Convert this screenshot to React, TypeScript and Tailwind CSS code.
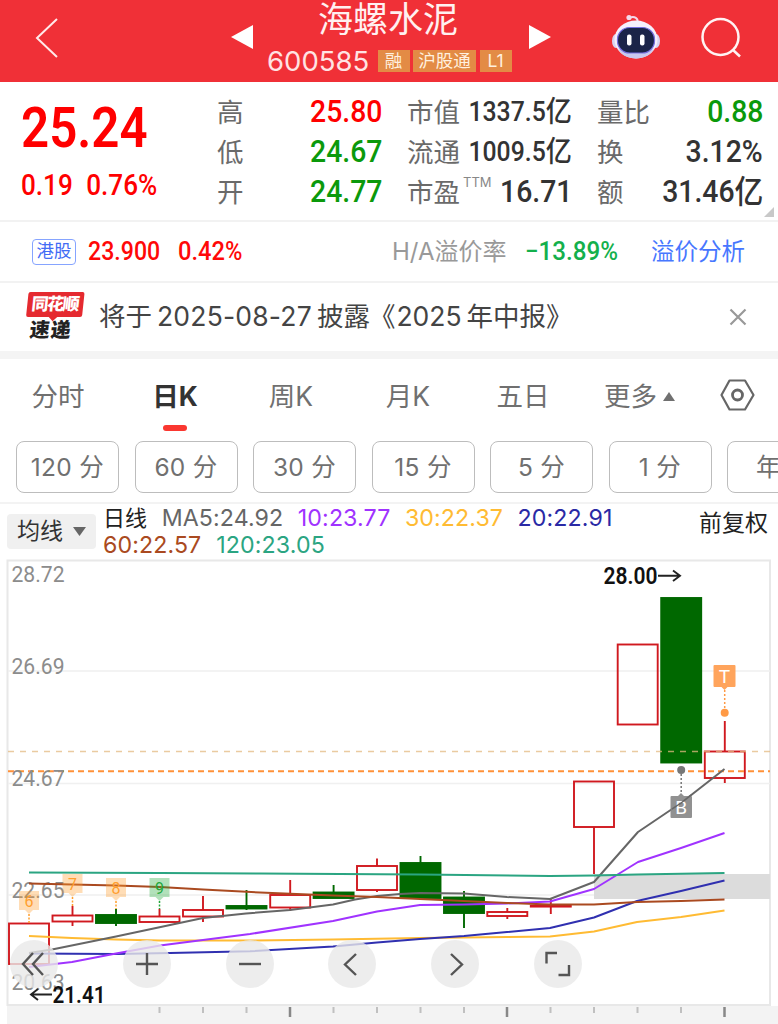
import clsx from "clsx";

const tags = [
  { label: "融", width: "w-[32px]" },
  { label: "沪股通", width: "w-[63px]" },
  { label: "L1", width: "w-[32px]" },
];

const tabs = [
  { label: "分时", width: "w-[116px]" },
  { label: "日K", width: "w-[118px]", active: true },
  { label: "周K", width: "w-[114px]" },
  { label: "月K", width: "w-[120px]" },
  { label: "五日", width: "w-[110px]" },
];

const periods = ["120 分", "60 分", "30 分", "15 分", "5 分", "1 分", "年"];

const averages = [
  { text: "MA5:24.92", className: "text-[#666666]" },
  { text: "10:23.77", className: "text-[#a033ff]" },
  { text: "30:22.37", className: "text-[#ffbb33]" },
  { text: "20:22.91", className: "text-[#2a2aa5]" },
];

type Candle = {
  x: number;
  top: number;
  bottom: number;
  high?: number;
  low?: number;
  down?: boolean;
};

const candles: Candle[] = [
  { x: 29, top: 923.5, bottom: 964 },
  { x: 72.5, top: 915.5, bottom: 921.5, high: 906, low: 926 },
  { x: 116, top: 915, bottom: 923, high: 909, low: 926, down: true },
  { x: 159.5, top: 916.5, bottom: 922, high: 909 },
  { x: 203, top: 910, bottom: 916.5, high: 896, low: 922 },
  { x: 246.5, top: 906, bottom: 908.5, high: 890, low: 910, down: true },
  { x: 290.2, top: 895, bottom: 907.5, high: 880, low: 911 },
  { x: 333.6, top: 892.5, bottom: 898, high: 885, down: true },
  { x: 377, top: 866, bottom: 890, high: 858.5, low: 892 },
  { x: 420.5, top: 863, bottom: 898, high: 856, low: 900, down: true },
  { x: 464, top: 897.5, bottom: 913, high: 891, low: 928, down: true },
  { x: 507.3, top: 912, bottom: 916, high: 908, low: 919 },
  { x: 550.8, top: 905.8, bottom: 906.6, high: 899, low: 914 },
  { x: 594, top: 781.5, bottom: 827, low: 874 },
  { x: 637.7, top: 644.5, bottom: 724.5 },
  { x: 681.2, top: 598, bottom: 762.5, down: true },
  { x: 724.8, top: 751.5, bottom: 778, high: 721, low: 783 },
];

const lines = [
  { color: "#ffbb33", points: "29,936 72,938 116,939.5 160,940.5 250,940.5 333,939.5 420,938 507,937 550,936.5 594,931.5 637,922 681,917 724.5,910.5" },
  { color: "#3030b0", points: "29,953.5 116,954 170,953 250,951.3 333,946.5 377,942.5 420,939 464,936 507,932 550,928 594,917.5 637,901 681,891 724.5,880.5" },
  { color: "#a033ff", points: "29,967 72,962 116,953.5 160,945.5 203,940 250,934 333,921 377,911.5 420,905 464,904.5 507,903.5 550,901.5 594,889 638,862 681,848 724.5,833" },
  { color: "#666666", points: "29,953 52,949.5 116,936.5 203,918 246,913.5 290,910 333,904.5 355,899.5 377,896 400,894 420,893 464,893.5 507,897 550,899 594,882 638,832 681,803 724.5,769" },
  { color: "#aa4a20", points: "29,883.5 72,884.5 116,885.5 160,887 203,889.5 260,892.5 333,895.5 377,897 420,899 507,903 550,904.5 594,904.5 637,902 681,901 724.5,899.5" },
  { color: "#2ba582", points: "29,872.5 160,873 260,873.5 420,874.5 550,876 594,875.5 637,874.5 724.5,873" },
];

const axis = [
  { label: "28.72", y: 582 },
  { label: "26.69", y: 674 },
  { label: "24.67", y: 786 },
  { label: "22.65", y: 898 },
  { label: "20.63", y: 990 },
];

const counts = [
  { n: "6", x: 29, y: 891, end: 923, color: "#ff9f2e" },
  { n: "7", x: 72.5, y: 874, end: 906, color: "#ff9f2e" },
  { n: "8", x: 116, y: 878, end: 909, color: "#ff9f2e" },
  { n: "9", x: 159.5, y: 878, end: 909, color: "#22a83a" },
];

const minorTicks = [159.5, 203, 246.5, 333.5, 377, 420.5, 464, 550.5, 594, 637.5, 681];
const majorTicks = [290, 507, 724.5];

const controls = [
  { name: "first", left: "left-[10px]", d: "M23 13 13 24l10 11M33 13 23 24l10 11" },
  { name: "zoom in", left: "left-[123px]", d: "M24 13v22M13 24h22" },
  { name: "zoom out", left: "left-[226px]", d: "M13 24h22" },
  { name: "previous", left: "left-[328px]", d: "M28 14 17 24.500 28 35" },
  { name: "next", left: "left-[431px]", d: "M20 14l11 10.500-11 10.500" },
  { name: "full screen", left: "left-[534px]", d: "M23 13H12.500v10.500M24.500 35H35V25" },
];

function Robot() {
  return (
    <svg className="h-[46px] w-[48px]" viewBox="0 0 48 46">
      <circle cx="17" cy="3.500" r="2.600" fill="#f4d8ea" />
      <path d="M18 3.500c5-1.500 8 1 7.500 4" fill="none" stroke="#f4d8ea" strokeWidth="2" />
      <ellipse cx="4" cy="27" rx="4" ry="7" fill="#d8d4f2" />
      <ellipse cx="44" cy="27" rx="4" ry="7" fill="#d8d4f2" />
      <ellipse cx="24" cy="25.500" rx="21.500" ry="19" fill="#f5effc" />
      <path d="M6 34c5 14 31 14 36 0-5 7-31 7-36 0Z" fill="#c9c8ee" />
      <rect x="5.500" y="13.500" width="37" height="25.500" rx="12" fill="#1b2448" stroke="#756ee0" strokeWidth="1.200" />
      <rect x="15" y="20.500" width="4.500" height="11" rx="2" fill="#fff" />
      <rect x="28" y="20.500" width="4.500" height="11" rx="2" fill="#fff" />
    </svg>
  );
}

function Header() {
  return (
    <header className="flex h-[82px] items-start bg-[#f03037] text-white">
      <svg className="mt-[18px] ml-[34px] h-[42px] w-[26px]" viewBox="0 0 26 42" fill="none" stroke="#ffeaea" strokeWidth="2">
        <path d="M23 1 3 20l20 19" />
      </svg>
      <svg className="mt-[24px] ml-[171px] h-[26px] w-[23px]" viewBox="0 0 23 26">
        <path d="M0 13 22 1v24Z" fill="#fff" />
      </svg>
      <div className="w-[274px]">
        <h1 className="ml-[64px] h-[38px] text-[35px] leading-[38px] whitespace-nowrap text-[#fff0f0]">海螺水泥</h1>
        <div className="mt-[10px] ml-[13px] flex h-[26px] items-center gap-[3.500px]">
          <span className="mr-[5px] w-[102px] text-[27.500px] leading-[26px] whitespace-nowrap text-[#ffe3e3]">600585</span>
          {tags.map((t) => (
            <span key={t.label} className={clsx("h-[22px] shrink-0 bg-[#e38b45] text-center text-[17.500px] leading-[21px] whitespace-nowrap text-[#fff0df]", t.width)}>
              {t.label}
            </span>
          ))}
        </div>
      </div>
      <svg className="mt-[24px] h-[26px] w-[23px]" viewBox="0 0 23 26">
        <path d="M1 1v24l22-12Z" fill="#fff" />
      </svg>
      <div className="mt-[14px] ml-[61px]">
        <Robot />
      </div>
      <svg className="mt-[16px] ml-[40px] h-[44px] w-[44px]" viewBox="0 0 44 44" fill="none" stroke="#fff3f3" strokeWidth="2.500">
        <circle cx="20.500" cy="21" r="18" />
        <path d="m33 34 7 6.500" />
      </svg>
    </header>
  );
}

type StatProps = {
  label: string;
  value: string;
  unit?: string;
  sup?: string;
  color?: string;
  small?: boolean;
};

function Stat({ label, value, unit, sup, color = "text-[#333]", small }: StatProps) {
  return (
    <div className="flex h-10 items-center justify-between">
      <span className="relative text-[26.500px] leading-10 whitespace-nowrap text-[#6a6a6a]">
        {label}
        {sup && <sup className="absolute top-[-1px] left-[56px] text-[13px] leading-[22px] text-[#888]">{sup}</sup>}
      </span>
      <span
        className={clsx(
          "-ml-6 flex origin-right scale-x-90 items-center font-[Roboto,'Noto_Sans_CJK_SC',sans-serif] leading-10 font-medium whitespace-nowrap",
          color,
          small ? "text-[27.500px]" : "text-[31.500px]",
        )}
      >
        {value}
        {unit && <span className={clsx("leading-10", small ? "text-[29px]" : "text-[32px]")}>{unit}</span>}
      </span>
    </div>
  );
}

function Quote() {
  return (
    <section className="relative flex h-[140px] border-b-2 border-[#f2f2f2] pt-[10px]">
      <div className="w-[217px] pl-[21px] font-[Roboto,sans-serif] font-medium whitespace-nowrap text-[#ff0000]">
        <div className="mt-[5px] h-[62px] origin-left scale-x-[0.880] text-[56px] leading-[62px] font-semibold">25.24</div>
        <div className="mt-[11px] flex h-[30px] origin-left scale-x-90 gap-[15px] text-[29px] leading-[30px]">
          <span>0.19</span>
          <span>0.76%</span>
        </div>
      </div>
      <div className="w-[165px]">
        <Stat label="高" value="25.80" color="text-[#ff0000]" />
        <Stat label="低" value="24.67" color="text-[#0b990b]" />
        <Stat label="开" value="24.77" color="text-[#0b990b]" />
      </div>
      <div className="ml-[25px] w-[165px]">
        <Stat label="市值" value="1337.5" unit="亿" small />
        <Stat label="流通" value="1009.5" unit="亿" small />
        <Stat label="市盈" value="16.71" sup="TTM" />
      </div>
      <div className="ml-[25px] w-[166px]">
        <Stat label="量比" value="0.88" color="text-[#0b990b]" />
        <Stat label="换" value="3.12%" />
        <Stat label="额" value="31.46" unit="亿" />
      </div>
      <svg className="absolute right-[4px] bottom-[3px] size-[10px]" viewBox="0 0 10 10">
        <path d="M10 0v10H0Z" fill="#c8c8c8" />
      </svg>
    </section>
  );
}

function HShare() {
  return (
    <section className="flex h-[61px] items-center border-b-2 border-[#f2f2f2] pl-[32px] whitespace-nowrap">
      <span className="h-[26px] w-[44px] rounded-[4px] border-[1.500px] border-[#86a4ff] text-center text-[17.500px] leading-[22px] text-[#426cf5]">港股</span>
      <span className="ml-[12px] w-[90px] font-[Roboto,sans-serif] text-[26px] font-medium text-[#ff0808]">
        <span className="inline-block origin-left scale-x-[0.890]">23.900</span>
      </span>
      <span className="w-[214px] font-[Roboto,sans-serif] text-[26px] font-medium text-[#ff0808]">
        <span className="inline-block origin-left scale-x-[0.910]">0.42%</span>
      </span>
      <span className="w-[133px] text-[24px] text-[#999]">H/A溢价率</span>
      <span className="w-[126px] font-[Roboto,sans-serif] text-[26px] font-medium text-[#14b04c]">
        <span className="inline-block origin-left scale-x-[0.930]">−13.89%</span>
      </span>
      <span className="text-[23.500px] text-[#4777ff]">溢价分析</span>
    </section>
  );
}

function Notice() {
  return (
    <section className="flex h-[76px] items-center border-b-8 border-[#f4f4f4] text-[#444]">
      <div className="ml-[25px] flex h-[50px] w-[57px] -skew-x-6 flex-col items-center">
        <div className="relative h-[25px] w-[56px] rounded-[2px] bg-[#e52a30] text-center text-[17px] leading-[24px] font-black tracking-[-1.500px] text-white">
          同花顺
          <span className="absolute bottom-[-3px] left-[24px] size-[6px] rotate-45 bg-[#e52a30]" />
        </div>
        <div className="mt-[3px] ml-[-3px] text-[20px] leading-[21px] font-black tracking-[1px] text-[#222]">速递</div>
      </div>
      <p className="ml-[17px] flex w-[630px] items-center text-[26.500px] whitespace-nowrap">
        将于<span className="mr-[5px] ml-[5px] tracking-[0.200px]">2025-08-27</span>披露<span className="ml-[-1px]">《</span>
        <span className="mr-[5px] ml-[1px]">2025</span>年中报<span>》</span>
      </p>
      <svg className="size-[18px]" viewBox="0 0 18 18" stroke="#999" strokeWidth="2.200">
        <path d="m1.500 1.500 15 15M16.500 1.500l-15 15" />
      </svg>
    </section>
  );
}

function Tabs() {
  return (
    <nav className="flex h-[82px] text-[26.500px] whitespace-nowrap text-[#707070]">
      {tabs.map((t) => (
        <div key={t.label} className={clsx("flex flex-col items-center", t.width)}>
          <span className={clsx("mt-[17px] h-10 leading-10", t.active && "font-bold text-[#333]")}>{t.label}</span>
          {t.active && <span className="mt-[9px] h-[6px] w-[24px] rounded-[3px] bg-[#fa3730]" />}
        </div>
      ))}
      <div className="mt-[17px] ml-[26px] flex h-10 w-[116px] items-center gap-[6px] leading-10">
        更多
        <svg className="h-[9px] w-[12px]" viewBox="0 0 12 9">
          <path d="M6 0l6 9H0Z" fill="#707070" />
        </svg>
      </div>
      <svg className="mt-[20px] h-[32px] w-[35px]" viewBox="0 0 35 32" fill="none" stroke="#666" strokeWidth="2.200" strokeLinejoin="round">
        <path d="M9.500 1.500h15.500l8.500 14.500-8.500 14.500H9.500L1.500 16Z" />
        <circle cx="17.500" cy="16" r="5" strokeWidth="2.800" />
      </svg>
    </nav>
  );
}

function Periods() {
  return (
    <div className="flex h-[63px] gap-[15.500px] overflow-hidden border-b-2 border-[#f3f3f3] pl-[16px] text-[24.500px] tracking-[0.300px] text-[#707070] [word-spacing:-2px]">
      {periods.map((p) => (
        <button
          key={p}
          className={clsx("h-[52px] w-[103px] shrink-0 rounded-[8px] border-[1.500px] border-[#bdbdbd] leading-[49px] whitespace-nowrap", p === "年" && "pr-[20px]")}
        >
          {p}
        </button>
      ))}
    </div>
  );
}

function Legend() {
  return (
    <div className="flex h-[55px] whitespace-nowrap">
      <button className="mt-[10px] ml-[7px] flex h-[35px] w-[89px] items-center rounded-[4px] bg-[#f0f0f0] pl-[10px] text-[23px] text-[#333]">
        均线
        <svg className="ml-[10px] h-[9px] w-[13px]" viewBox="0 0 13 9">
          <path d="M0 0h13L6.500 9Z" fill="#666" />
        </svg>
      </button>
      <div className="ml-[7px] w-[596px] text-[23.200px] tracking-[0.100px]">
        <div className="flex h-[28px] gap-[14.500px] leading-[28px]">
          <span className="text-[22px] text-[#222]">日线</span>
          {averages.map((a) => (
            <span key={a.text} className={a.className}>{a.text}</span>
          ))}
        </div>
        <div className="flex h-[27px] gap-[15px] leading-[27px]">
          <span className="text-[#aa4a20]">60:22.57</span>
          <span className="text-[#2ba582]">120:23.05</span>
        </div>
      </div>
      <span className="mt-[2px] text-[23px] leading-[35px] text-[#222]">前复权</span>
    </div>
  );
}

function Chart() {
  return (
    <section className="relative h-[465px]">
      <svg className="block h-[465px] w-[778px] font-[Roboto,sans-serif]" viewBox="0 559 778 465">
        <rect x="7" y="1006" width="771" height="18" fill="#f3f3f3" />
        <path d="M7.500 560.500H770V1005H7.500Z" fill="none" stroke="#e8e8e8" strokeWidth="2" />
        <path d="M8 671h762M8 783.500h762M8 895h762" stroke="#f0f0f0" strokeWidth="1.500" />
        <path d={minorTicks.map((x) => `M${x} 1007v6`).join("")} stroke="#c0c0c0" strokeWidth="2" />
        <path d={majorTicks.map((x) => `M${x} 1007v10`).join("")} stroke="#888" strokeWidth="2.500" />
        <rect x="594" y="874" width="176" height="25" fill="#dcdcdc" />

        {candles.map((c) => {
          const color = c.down ? "#006800" : "#d0191f";
          return (
            <g key={c.x} stroke={color} strokeWidth="1.900">
              {c.high && <path d={`M${c.x} ${c.high}V${c.top}`} />}
              {c.low && <path d={`M${c.x} ${c.bottom}V${c.low}`} />}
              <rect x={c.x - 20} y={c.top} width="40" height={c.bottom - c.top} fill={c.down ? color : "none"} />
            </g>
          );
        })}

        <path d="M8 751.500h762" stroke="#e3b982" strokeOpacity="0.750" strokeWidth="1.500" strokeDasharray="6 6" />
        <path d="M8 771.200h762" stroke="#ff9138" strokeWidth="2" strokeDasharray="6 4" />

        {axis.map((a) => (
          <text key={a.label} x="11.500" y={a.y} fontSize="22.500" textLength="53" lengthAdjust="spacingAndGlyphs" fill="#8c8c8c">
            {a.label}
          </text>
        ))}

        {lines.map((l) => (
          <polyline key={l.color} points={l.points} fill="none" stroke={l.color} strokeWidth="2" strokeLinejoin="round" />
        ))}

        {/* Sequential count flags */}
        {counts.map((c) => (
          <g key={c.n}>
            <path d={`M${c.x - 10} ${c.y}h20v19h-6l-4 4-4-4h-6Z`} fill={c.color} fillOpacity="0.350" />
            <path d={`M${c.x} ${c.y + 23}V${c.end}`} stroke={c.color} strokeWidth="1.500" strokeDasharray="2 1.500" />
            <text x={c.x} y={c.y + 16} textAnchor="middle" fontSize="16" fill={c.color}>{c.n}</text>
          </g>
        ))}

        {/* Trade markers */}
        <path d="M714.500 665h20q1 0 1 1v20q0 1-1 1h-7l-3 3-3-3h-7q-1 0-1-1v-20q0-1 1-1Z" fill="#ffa45c" />
        <text x="724.500" y="683" textAnchor="middle" fontSize="19" fill="#fff">T</text>
        <path d="M724.700 690v18" stroke="#ff9a45" strokeWidth="1.500" strokeDasharray="2 2" />
        <circle cx="724.700" cy="712.700" r="4" fill="#ff9a45" />
        <circle cx="681.200" cy="770" r="4" fill="#777" />
        <path d="M681.200 774v20" stroke="#777" strokeWidth="1.500" strokeDasharray="2 2" />
        <path d="M671.500 796h6.500l3-3 3 3h7q1 0 1 1v20q0 1-1 1h-19.500q-1 0-1-1v-20q0-1 1-1Z" fill="#858585" fillOpacity="0.900" />
        <text x="681.200" y="814" textAnchor="middle" fontSize="19" fill="#fff">B</text>
        <path d="m672 809 9-6 10-7.800" fill="none" stroke="#666" strokeWidth="1.500" />

        <text x="603.500" y="584" fontSize="23.500" fontWeight="600" textLength="54" lengthAdjust="spacingAndGlyphs" fill="#111">28.00</text>
        <path d="M658 575.700h21M673 570.500l7 5.200-7 5.200" fill="none" stroke="#222" strokeWidth="1.900" />
      </svg>

      {controls.map((c) => (
        <button key={c.name} aria-label={c.name} className={clsx("absolute top-[381px] size-[48px] rounded-full bg-[#e9e9e9]/80", c.left)}>
          <svg className="size-[48px]" viewBox="0 0 48 48" fill="none" stroke="#555" strokeWidth="2.400">
            <path d={c.d} />
          </svg>
        </button>
      ))}

      <svg className="absolute top-[422px] left-[28px] h-[28px] w-[90px] font-[Roboto,sans-serif]" viewBox="0 0 90 28">
        <path d="M24 13.500H3M10 8l-7 5.500 7 5.500" fill="none" stroke="#222" strokeWidth="1.900" />
        <text x="24.500" y="22" fontSize="23.500" fontWeight="600" textLength="53" lengthAdjust="spacingAndGlyphs" fill="#111">21.41</text>
      </svg>
    </section>
  );
}

export default function App() {
  return (
    <main className="h-[1024px] w-[778px] overflow-hidden bg-white font-[Inter,'Noto_Sans_CJK_SC',sans-serif]">
      <Header />
      <Quote />
      <HShare />
      <Notice />
      <Tabs />
      <Periods />
      <Legend />
      <Chart />
    </main>
  );
}
